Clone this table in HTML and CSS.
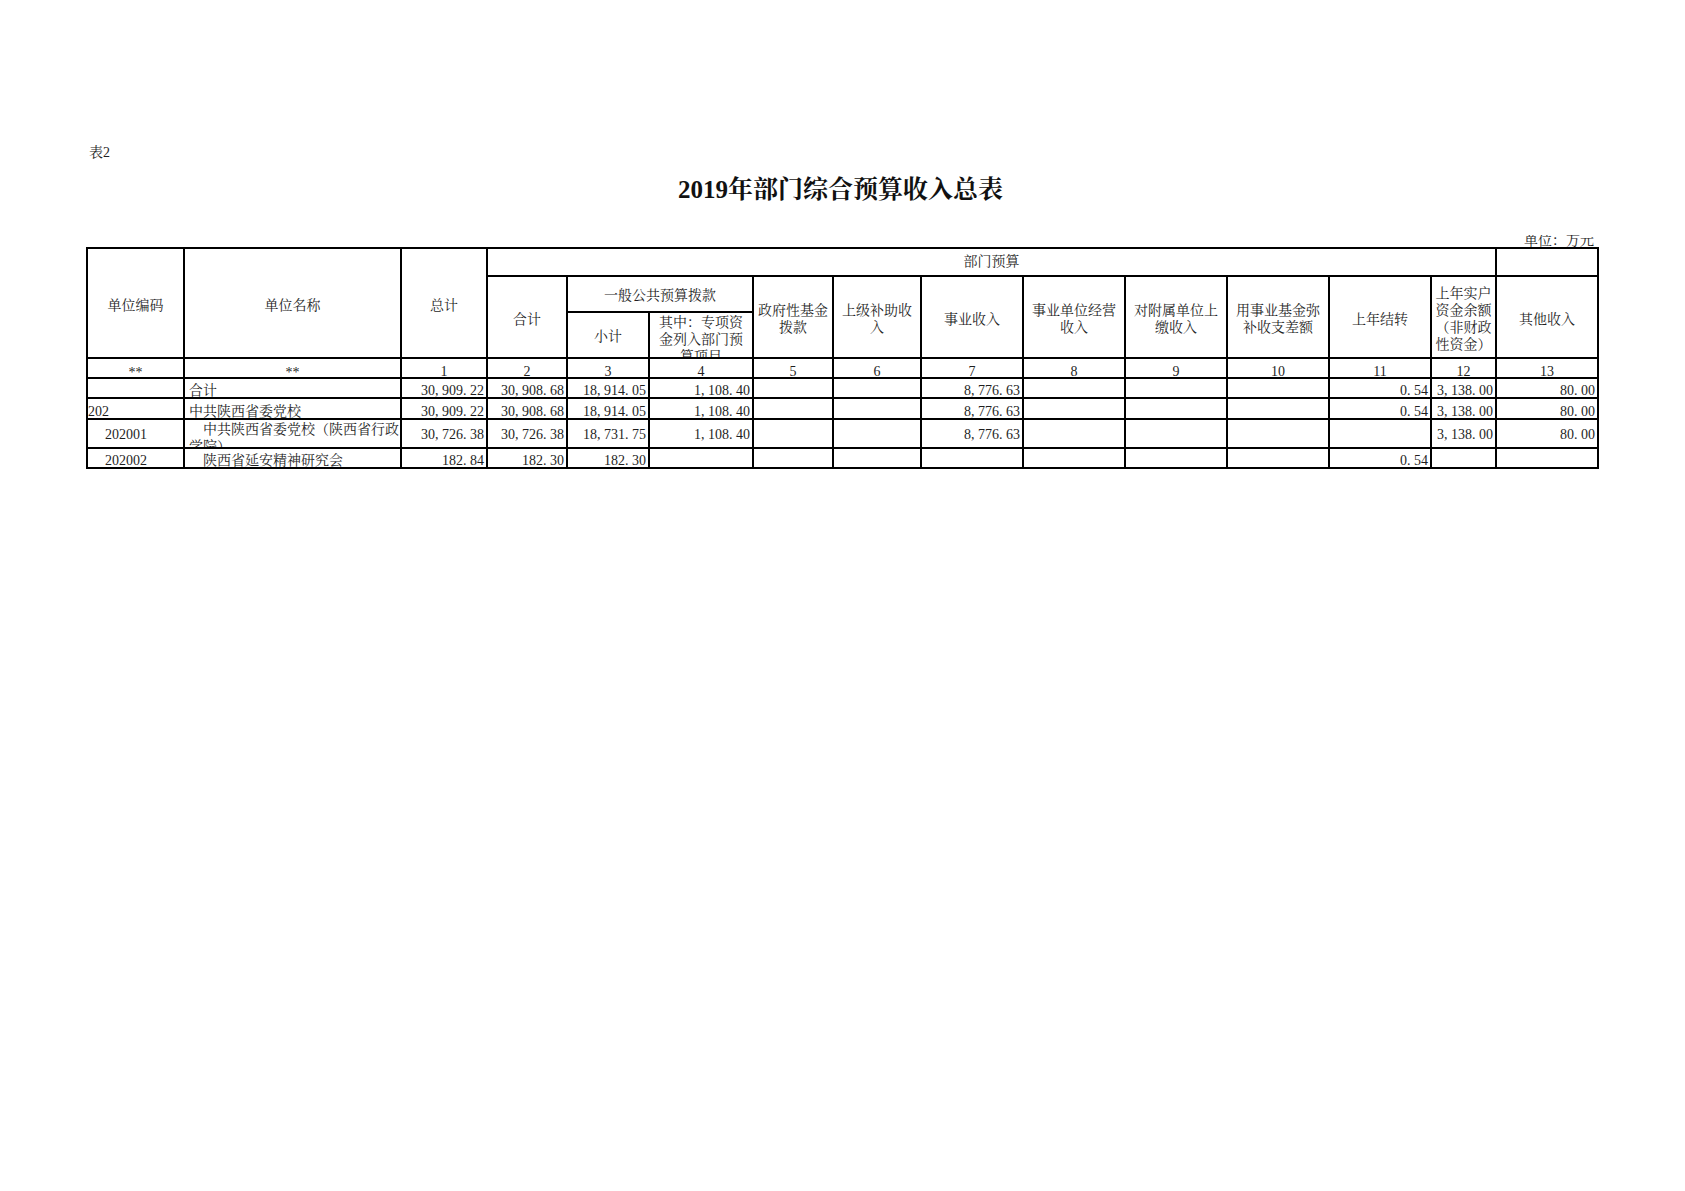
FILE: index.html
```html
<!DOCTYPE html>
<html lang="zh-CN">
<head>
<meta charset="utf-8">
<title>2019年部门综合预算收入总表</title>
<link rel="stylesheet" href="styles.css">
</head>
<body>
<div class="sheet">
  <div class="tag">表2</div>
  <h1 class="title">2019年部门综合预算收入总表</h1>
  <div class="unit">单位：万元</div>
  <table class="grid">
    <colgroup>
      <col class="w97"><col class="w217"><col class="w86"><col class="w80"><col class="w82">
      <col class="w104"><col class="w80"><col class="w88"><col class="w102"><col class="w102">
      <col class="w102"><col class="w102"><col class="w102"><col class="w65"><col class="w102">
    </colgroup>
    <thead>
      <tr class="ha">
        <th rowspan="3" class="hs">单位编码</th>
        <th rowspan="3" class="hs">单位名称</th>
        <th rowspan="3" class="hs">总计</th>
        <th colspan="11"><div class="box">部门预算</div></th>
        <th><div class="box"></div></th>
      </tr>
      <tr class="hb">
        <th rowspan="2" class="hs">合计</th>
        <th colspan="2"><div class="box">一般公共预算拨款</div></th>
        <th rowspan="2" class="hs">政府性基金<br>拨款</th>
        <th rowspan="2" class="hs">上级补助收<br>入</th>
        <th rowspan="2" class="hs">事业收入</th>
        <th rowspan="2" class="hs">事业单位经营<br>收入</th>
        <th rowspan="2" class="hs">对附属单位上<br>缴收入</th>
        <th rowspan="2" class="hs">用事业基金弥<br>补收支差额</th>
        <th rowspan="2" class="hs">上年结转</th>
        <th rowspan="2" class="hs">上年实户<br>资金余额<br>（非财政<br>性资金）</th>
        <th rowspan="2" class="hs">其他收入</th>
      </tr>
      <tr class="hc">
        <th><div class="box">小计</div></th>
        <th><div class="box wrap">其中：专项资<br>金列入部门预<br>算项目</div></th>
      </tr>
      <tr class="hd">
        <th><div class="box star">**</div></th>
        <th><div class="box star">**</div></th>
        <th><div class="box">1</div></th>
        <th><div class="box">2</div></th>
        <th><div class="box">3</div></th>
        <th><div class="box">4</div></th>
        <th><div class="box">5</div></th>
        <th><div class="box">6</div></th>
        <th><div class="box">7</div></th>
        <th><div class="box">8</div></th>
        <th><div class="box">9</div></th>
        <th><div class="box">10</div></th>
        <th><div class="box">11</div></th>
        <th><div class="box">12</div></th>
        <th><div class="box">13</div></th>
      </tr>
    </thead>
    <tbody>
      <tr class="r1">
        <td><div class="box code"></div></td>
        <td><div class="box name">合计</div></td>
        <td><div class="box num">30<span class="p">,</span>909<span class="p">.</span>22</div></td>
        <td><div class="box num">30<span class="p">,</span>908<span class="p">.</span>68</div></td>
        <td><div class="box num">18<span class="p">,</span>914<span class="p">.</span>05</div></td>
        <td><div class="box num">1<span class="p">,</span>108<span class="p">.</span>40</div></td>
        <td></td>
        <td></td>
        <td><div class="box num">8<span class="p">,</span>776<span class="p">.</span>63</div></td>
        <td></td>
        <td></td>
        <td></td>
        <td><div class="box num">0<span class="p">.</span>54</div></td>
        <td><div class="box num">3<span class="p">,</span>138<span class="p">.</span>00</div></td>
        <td><div class="box num">80<span class="p">.</span>00</div></td>
      </tr>
      <tr class="r2">
        <td><div class="box code">202</div></td>
        <td><div class="box name">中共陕西省委党校</div></td>
        <td><div class="box num">30<span class="p">,</span>909<span class="p">.</span>22</div></td>
        <td><div class="box num">30<span class="p">,</span>908<span class="p">.</span>68</div></td>
        <td><div class="box num">18<span class="p">,</span>914<span class="p">.</span>05</div></td>
        <td><div class="box num">1<span class="p">,</span>108<span class="p">.</span>40</div></td>
        <td></td>
        <td></td>
        <td><div class="box num">8<span class="p">,</span>776<span class="p">.</span>63</div></td>
        <td></td>
        <td></td>
        <td></td>
        <td><div class="box num">0<span class="p">.</span>54</div></td>
        <td><div class="box num">3<span class="p">,</span>138<span class="p">.</span>00</div></td>
        <td><div class="box num">80<span class="p">.</span>00</div></td>
      </tr>
      <tr class="r3">
        <td><div class="box code ind">202001</div></td>
        <td><div class="box name wrap">　中共陕西省委党校（陕西省行政<br>学院）</div></td>
        <td><div class="box num">30<span class="p">,</span>726<span class="p">.</span>38</div></td>
        <td><div class="box num">30<span class="p">,</span>726<span class="p">.</span>38</div></td>
        <td><div class="box num">18<span class="p">,</span>731<span class="p">.</span>75</div></td>
        <td><div class="box num">1<span class="p">,</span>108<span class="p">.</span>40</div></td>
        <td></td>
        <td></td>
        <td><div class="box num">8<span class="p">,</span>776<span class="p">.</span>63</div></td>
        <td></td>
        <td></td>
        <td></td>
        <td></td>
        <td><div class="box num">3<span class="p">,</span>138<span class="p">.</span>00</div></td>
        <td><div class="box num">80<span class="p">.</span>00</div></td>
      </tr>
      <tr class="r4">
        <td><div class="box code ind">202002</div></td>
        <td><div class="box name">　陕西省延安精神研究会</div></td>
        <td><div class="box num">182<span class="p">.</span>84</div></td>
        <td><div class="box num">182<span class="p">.</span>30</div></td>
        <td><div class="box num">182<span class="p">.</span>30</div></td>
        <td></td>
        <td></td>
        <td></td>
        <td></td>
        <td></td>
        <td></td>
        <td></td>
        <td><div class="box num">0<span class="p">.</span>54</div></td>
        <td></td>
        <td></td>
      </tr>
    </tbody>
  </table>
</div>
</body>
</html>
```

FILE: styles.css
```css
body {
  margin: 0;
  background: #fff;
  color: #1f1f1f;
  font-family: "Liberation Serif", "Noto Serif CJK SC", "Noto Sans CJK SC", serif;
}

.sheet {
  width: 1513px;
  margin-left: 86px;
  padding-top: 146px;
}

.tag {
  height: 14px;
  line-height: 14px;
  font-size: 14px;
  padding-left: 3px;
}

.title {
  margin: 17px 0 0;
  height: 25px;
  line-height: 25px;
  font-size: 25px;
  font-weight: 700;
  text-align: center;
  padding-right: 4px;
  color: #111;
}

.unit {
  margin-top: 33px;
  height: 12px;
  line-height: 12px;
  font-size: 14px;
  text-align: right;
  padding-right: 5px;
  overflow: hidden;
}

.grid {
  border-collapse: collapse;
  table-layout: fixed;
  width: 1513px;
  font-size: 14px;
}

.w97 { width: 97px; }
.w217 { width: 217px; }
.w86 { width: 86px; }
.w80 { width: 80px; }
.w82 { width: 82px; }
.w104 { width: 104px; }
.w88 { width: 88px; }
.w102 { width: 102px; }
.w65 { width: 65px; }

.grid th,
.grid td {
  border: 2px solid #000;
  padding: 0;
  font-weight: normal;
}

.grid th {
  text-align: center;
  vertical-align: middle;
}

.grid td {
  vertical-align: top;
}

.hs {
  padding-top: 4px !important;
  line-height: 17px;
}

.box {
  overflow: hidden;
  box-sizing: border-box;
  line-height: 14px;
  white-space: nowrap;
}

/* header rows */
.ha .box {
  height: 26px;
  line-height: 26px;
}

.hb .box {
  height: 34px;
  padding-top: 4px;
  line-height: 30px;
}

.hc .box {
  height: 44px;
  padding-top: 4px;
  line-height: 40px;
}

.hc .box.wrap {
  padding-top: 1px;
  line-height: 17px;
}

.hd .box {
  height: 18px;
  padding-top: 7px;
  line-height: 11px;
  text-align: center;
}

.hd .box.star {
  padding-top: 10px;
  line-height: 8px;
}

/* data rows */
.r1 .box,
.r4 .box {
  height: 18px;
  padding-top: 5px;
  line-height: 13px;
}

.r2 .box {
  height: 19px;
  padding-top: 6px;
  line-height: 13px;
}

.r3 .box {
  height: 27px;
  padding-top: 8px;
}

.r3 .box.wrap {
  padding-top: 1px;
  line-height: 17px;
}

.num {
  text-align: right;
  padding-right: 2px;
}

.name {
  text-align: left;
  padding-left: 4px;
}

.code {
  text-align: left;
}

.code.ind {
  padding-left: 17px;
}

.p {
  display: inline-block;
  width: 7px;
  text-align: left;
}
```
